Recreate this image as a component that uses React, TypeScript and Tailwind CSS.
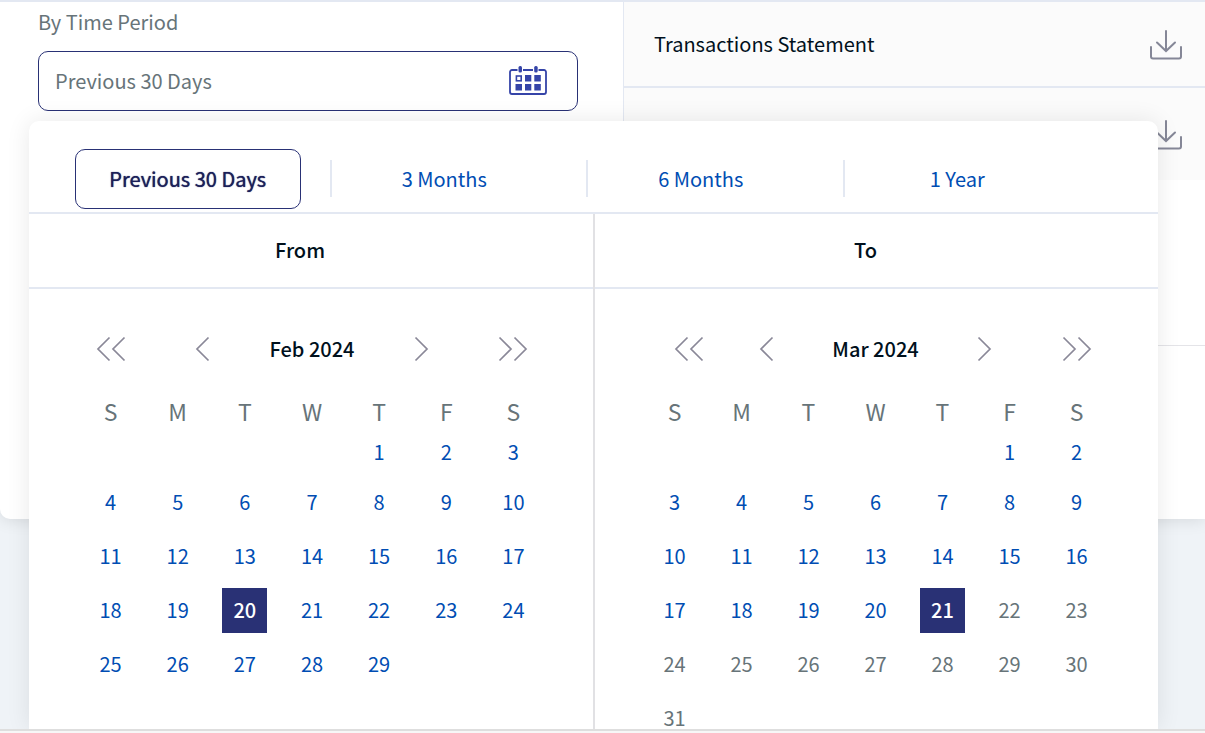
type Month = {
  title: string;
  firstDay: number;
  days: number;
  selected: number;
  lastEnabled: number;
};

const february: Month = { title: "Feb 2024", firstDay: 4, days: 29, selected: 20, lastEnabled: 29 };
const march: Month = { title: "Mar 2024", firstDay: 5, days: 31, selected: 21, lastEnabled: 21 };

const weekdays = ["S", "M", "T", "W", "T", "F", "S"];
const periods = ["Previous 30 Days", "3 Months", "6 Months", "1 Year"];

function getWeeks({ firstDay, days }: Month) {
  const cells: (number | null)[] = Array(firstDay).fill(null);
  for (let d = 1; d <= days; d++) cells.push(d);
  while (cells.length % 7) cells.push(null);
  const weeks: (number | null)[][] = [];
  for (let i = 0; i < cells.length; i += 7) weeks.push(cells.slice(i, i + 7));
  return weeks;
}

function DownloadIcon() {
  return (
    <svg width="34" height="32" viewBox="0 0 34 32" fill="none" stroke="#858797" strokeWidth="2" strokeLinecap="round">
      <path d="M17 3v20M8 14.500l9 8.500 9-8.500" />
      <path d="M2 19v9.500a2 2 0 0 0 2 2h26a2 2 0 0 0 2-2V19" />
    </svg>
  );
}

function CalendarIcon() {
  return (
    <svg width="40" height="32" viewBox="0 0 40 32" fill="#3544a8">
      <path
        d="M9.500 5H4A2 2 0 0 0 2 7V27A2 2 0 0 0 4 29H36A2 2 0 0 0 38 27V7A2 2 0 0 0 36 5H30.500M15 5H25"
        fill="none"
        stroke="#3544a8"
        strokeWidth="1.800"
      />
      <rect x="10.500" y="1" width="3.500" height="6.500" rx="1.500" />
      <rect x="26.200" y="1" width="3.500" height="6.500" rx="1.500" />
      <rect x="8.400" y="11" width="4.800" height="4.800" fill="none" stroke="#3544a8" strokeWidth="1.600" />
      <rect x="17" y="10" width="6.300" height="6.500" />
      <rect x="26.300" y="10" width="6.500" height="6.500" />
      <rect x="7.500" y="19" width="6.500" height="6.500" />
      <rect x="17" y="19" width="6.300" height="6.500" />
      <rect x="26.300" y="19" width="6.500" height="6.500" />
    </svg>
  );
}

function Chevron({ double = false, right = false }: { double?: boolean; right?: boolean }) {
  return (
    <svg
      width={double ? 30 : 15}
      height="26"
      viewBox={double ? "0 0 30 26" : "0 0 15 26"}
      fill="none"
      stroke="#8a8898"
      strokeWidth="1.700"
      className={right ? "rotate-180" : ""}
    >
      <path d="M13.500 1.500 2 13l11.500 11.500" />
      {double && <path d="M28.500 1.500 17 13l11.500 11.500" />}
    </svg>
  );
}

function Calendar({ month, firstArrow, className }: { month: Month; firstArrow: string; className: string }) {
  return (
    <div className={`pt-[30px] ${className}`}>
      <div className="grid h-15 grid-cols-[1fr_5fr_1fr] items-center">
        <button aria-label="Previous year" className={`flex ${firstArrow}`}>
          <Chevron double />
        </button>
        <div className="flex items-center justify-between px-[51px]">
          <button aria-label="Previous month">
            <Chevron />
          </button>
          <h3 className="font-medium text-[#00101c]">{month.title}</h3>
          <button aria-label="Next month">
            <Chevron right />
          </button>
        </div>
        <button aria-label="Next year" className="flex justify-center">
          <Chevron double right />
        </button>
      </div>
      <table className="mt-[17px] w-full table-fixed border-collapse text-center leading-5">
        <thead>
          <tr className="h-[33px] text-[23px] text-[#677479]">
            {weekdays.map((day, i) => (
              <th key={i} scope="col" className="px-0 pt-0 pb-1 font-normal">
                {day}
              </th>
            ))}
          </tr>
        </thead>
        <tbody>
          {getWeeks(month).map((week, i) => (
            <tr key={i} className={i === 0 ? "h-[46px]" : "h-[54px]"}>
              {week.map((day, j) => (
                <td key={j} className="p-0 align-middle">
                  {day && (
                    <button
                      disabled={day > month.lastEnabled}
                      className={
                        day === month.selected
                          ? "mx-auto block size-[45px] bg-[#293175] font-medium text-white"
                          : "mx-auto block size-[45px] text-[#004db3] disabled:text-[#677479]"
                      }
                    >
                      {day}
                    </button>
                  )}
                </td>
              ))}
            </tr>
          ))}
        </tbody>
      </table>
    </div>
  );
}

export default function App() {
  return (
    <div className="flex h-screen flex-col bg-[#eff3f7] font-['Noto_Sans_CJK_SC',sans-serif] text-[20px] leading-7">
      <main className="relative flex-1 overflow-hidden">
        <div className="grid h-[519px] grid-cols-[623fr_582fr] rounded-bl-[10px] border-t-2 border-[#e3e8f2] bg-white shadow-[0_2px_16px_rgba(0,0,0,0.1)]">
          <section className="pt-[6px] pr-[45px] pl-[38px]">
            <label htmlFor="period" className="block text-[#677479]">
              By Time Period
            </label>
            <div className="mt-[15px] flex h-15 items-center rounded-[10px] border border-[#293175] pr-[29px] pl-4">
              <input
                id="period"
                readOnly
                value="Previous 30 Days"
                className="min-w-0 flex-1 text-[#677479] outline-none"
              />
              <button aria-label="Open calendar">
                <CalendarIcon />
              </button>
            </div>
          </section>
          <section className="border-l border-[#e3e8f2]">
            <div className="flex h-[86px] items-center justify-between border-b-2 border-[#e3e8f2] bg-[#fbfbfb] pr-[22px] pl-[30px] text-[#00101c]">
              Transactions Statement
              <button aria-label="Download transactions statement">
                <DownloadIcon />
              </button>
            </div>
            <div className="flex h-[92px] items-center justify-end bg-[#fbfbfb] pr-[22px]">
              <button aria-label="Download statement">
                <DownloadIcon />
              </button>
            </div>
            <div className="h-[166px] border-b border-[#e4e4e8]" />
          </section>
        </div>

        <div className="absolute top-[121px] right-[47px] bottom-0 left-[29px] overflow-hidden rounded-t-[10px] bg-white shadow-[0_0_24px_rgba(0,0,0,0.09)]">
          <div className="grid h-[93px] grid-cols-4 items-center border-b-2 border-[#e3e8f2] pt-6 pr-[59px] pl-11">
            {periods.map((period, i) => (
              <div
                key={period}
                className={`flex h-[37px] items-center border-l-2 pr-[29px] ${i === 0 ? "border-transparent" : "border-[#e3e8f2]"}`}
              >
                <button
                  className={
                    i === 0
                      ? "h-15 flex-1 rounded-[10px] border border-[#293175] text-[#1b2059] [text-shadow:0_0_1px_#1b2059]"
                      : "h-15 flex-1 text-[#004db3]"
                  }
                >
                  {period}
                </button>
              </div>
            ))}
          </div>
          <div className="grid grid-cols-[566fr_563fr]">
            <section className="border-r-2 border-[#e1e1e4]">
              <h2 className="flex h-[75px] items-center justify-center border-b-2 border-[#e3e8f2] pr-[22px] pb-px font-medium text-[#00101c]">
                From
              </h2>
              <Calendar month={february} firstArrow="justify-center" className="pr-[46px] pl-12" />
            </section>
            <section>
              <h2 className="flex h-[75px] items-center justify-center border-b-2 border-[#e3e8f2] pr-[22px] pb-px font-medium text-[#00101c]">
                To
              </h2>
              <Calendar month={march} firstArrow="justify-end pr-1" className="pr-12 pl-[46px]" />
            </section>
          </div>
        </div>
      </main>
      <footer className="h-1 border-t-2 border-[#dedede] bg-[#f7f7f7]" />
    </div>
  );
}
